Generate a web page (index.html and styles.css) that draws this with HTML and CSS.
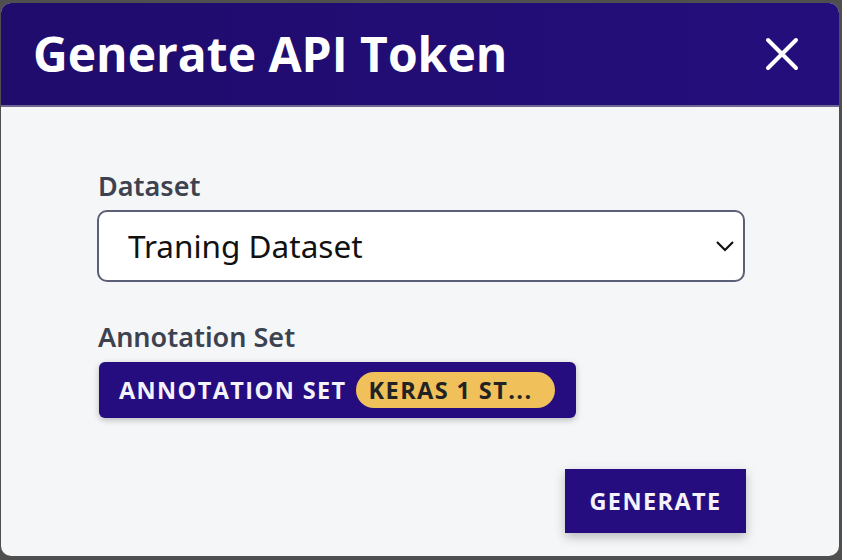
FILE: index.html
```html
<!DOCTYPE html>
<html>
<head>
<meta charset="utf-8">
<link rel="stylesheet" href="styles.css">
</head>
<body>
<div class="backdrop">
  <div class="dialog">
    <div class="header">
      <h1 class="title">Generate API Token</h1>
      <button class="close" aria-label="Close">
        <svg width="34" height="34" viewBox="0 0 34 34"><path d="M3 3 L31 31 M31 3 L3 31" stroke="#fff" stroke-width="4" stroke-linecap="round"/></svg>
      </button>
    </div>
    <div class="body">
      <div class="field">
        <label class="label">Dataset</label>
        <div class="select">
          <span class="select-text">Traning Dataset</span>
          <svg class="chevron" width="20" height="12" viewBox="0 0 20 12"><path d="M2 2 L10 10 L18 2" fill="none" stroke="#111" stroke-width="2.2"/></svg>
        </div>
      </div>
      <div class="field field2">
        <label class="label">Annotation Set</label>
        <div class="chip">
          <span class="chip-label">ANNOTATION SET</span>
          <span class="pill">KERAS 1 ST...</span>
        </div>
      </div>
      <div class="actions">
        <button class="generate">GENERATE</button>
      </div>
    </div>
  </div>
</div>
</body>
</html>
```
FILE: styles.css
```css
* { box-sizing: border-box; }
html, body { margin: 0; padding: 0; }
body {
  width: 842px;
  height: 560px;
  background: #4f4f4f;
  font-family: "Noto Sans", "Open Sans", sans-serif;
  overflow: hidden;
}
.backdrop {
  padding: 3px 3px 4px 1px;
  height: 560px;
}
.dialog {
  width: 838px;
  height: 553px;
  border-radius: 10px;
  overflow: hidden;
  background: #f5f6f8;
  display: flex;
  flex-direction: column;
}
.header {
  height: 104px;
  background: linear-gradient(90deg, #1f0c6c, #240e7c);
  border-bottom: 2px solid #6e6890;
  display: flex;
  align-items: center;
  justify-content: space-between;
  padding: 0 40px 0 32px;
}
.title {
  margin: 0;
  color: #fff;
  font-family: "Open Sans", "Noto Sans", sans-serif;
  font-weight: 700;
  font-size: 48px;
  letter-spacing: 0px;
  padding-bottom: 2px;
}
.close {
  background: none;
  border: 0;
  padding: 0;
  width: 34px;
  height: 34px;
  display: flex;
}
.body {
  flex: 1;
  padding: 62px 96px 0 96px;
  display: flex;
  flex-direction: column;
}
.field { display: flex; flex-direction: column; }
.label {
  color: #3d4250;
  font-size: 27px;
  font-weight: 600;
  line-height: 34px;
  margin-bottom: 7px;
  padding-left: 1px;
}
.select {
  width: 648px;
  height: 72px;
  border: 2px solid #5b6078;
  border-radius: 10px;
  background: #fff;
  display: flex;
  align-items: center;
  justify-content: space-between;
  padding: 0 8px 0 29px;
}
.select-text {
  color: #111;
  font-size: 31.5px;
  padding-bottom: 2px;
}
.field2 { margin-top: 38px; }
.field2 .label { margin-bottom: 8px; }
.chip {
  align-self: flex-start;
  margin-left: 2px;
  width: 477px;
  height: 56px;
  background: #250d80;
  border-radius: 6px;
  box-shadow: 0 2px 6px rgba(0,0,0,0.25);
  display: flex;
  align-items: center;
  padding-left: 20px;
  gap: 9px;
}
.chip-label {
  color: #f4f2fa;
  font-family: "Open Sans", "Noto Sans", sans-serif;
  font-weight: 700;
  font-size: 23.5px;
  letter-spacing: 1.4px;
}
.pill {
  background: #f0c05a;
  color: #222;
  border-radius: 18px;
  height: 36px;
  width: 199px;
  display: flex;
  align-items: center;
  padding-left: 13px;
  font-family: "Open Sans", "Noto Sans", sans-serif;
  font-weight: 700;
  font-size: 23.5px;
  letter-spacing: 1.4px;
}
.actions {
  display: flex;
  justify-content: flex-end;
  margin-top: 51px;
}
.generate {
  width: 181px;
  height: 64px;
  background: #250d80;
  border: 0;
  color: #f4f2fa;
  font-family: "Open Sans", "Noto Sans", sans-serif;
  font-weight: 700;
  font-size: 23.5px;
  letter-spacing: 1.4px;
  box-shadow: 0 4px 10px rgba(0,0,0,0.25);
  margin-right: -3px;
}
```
